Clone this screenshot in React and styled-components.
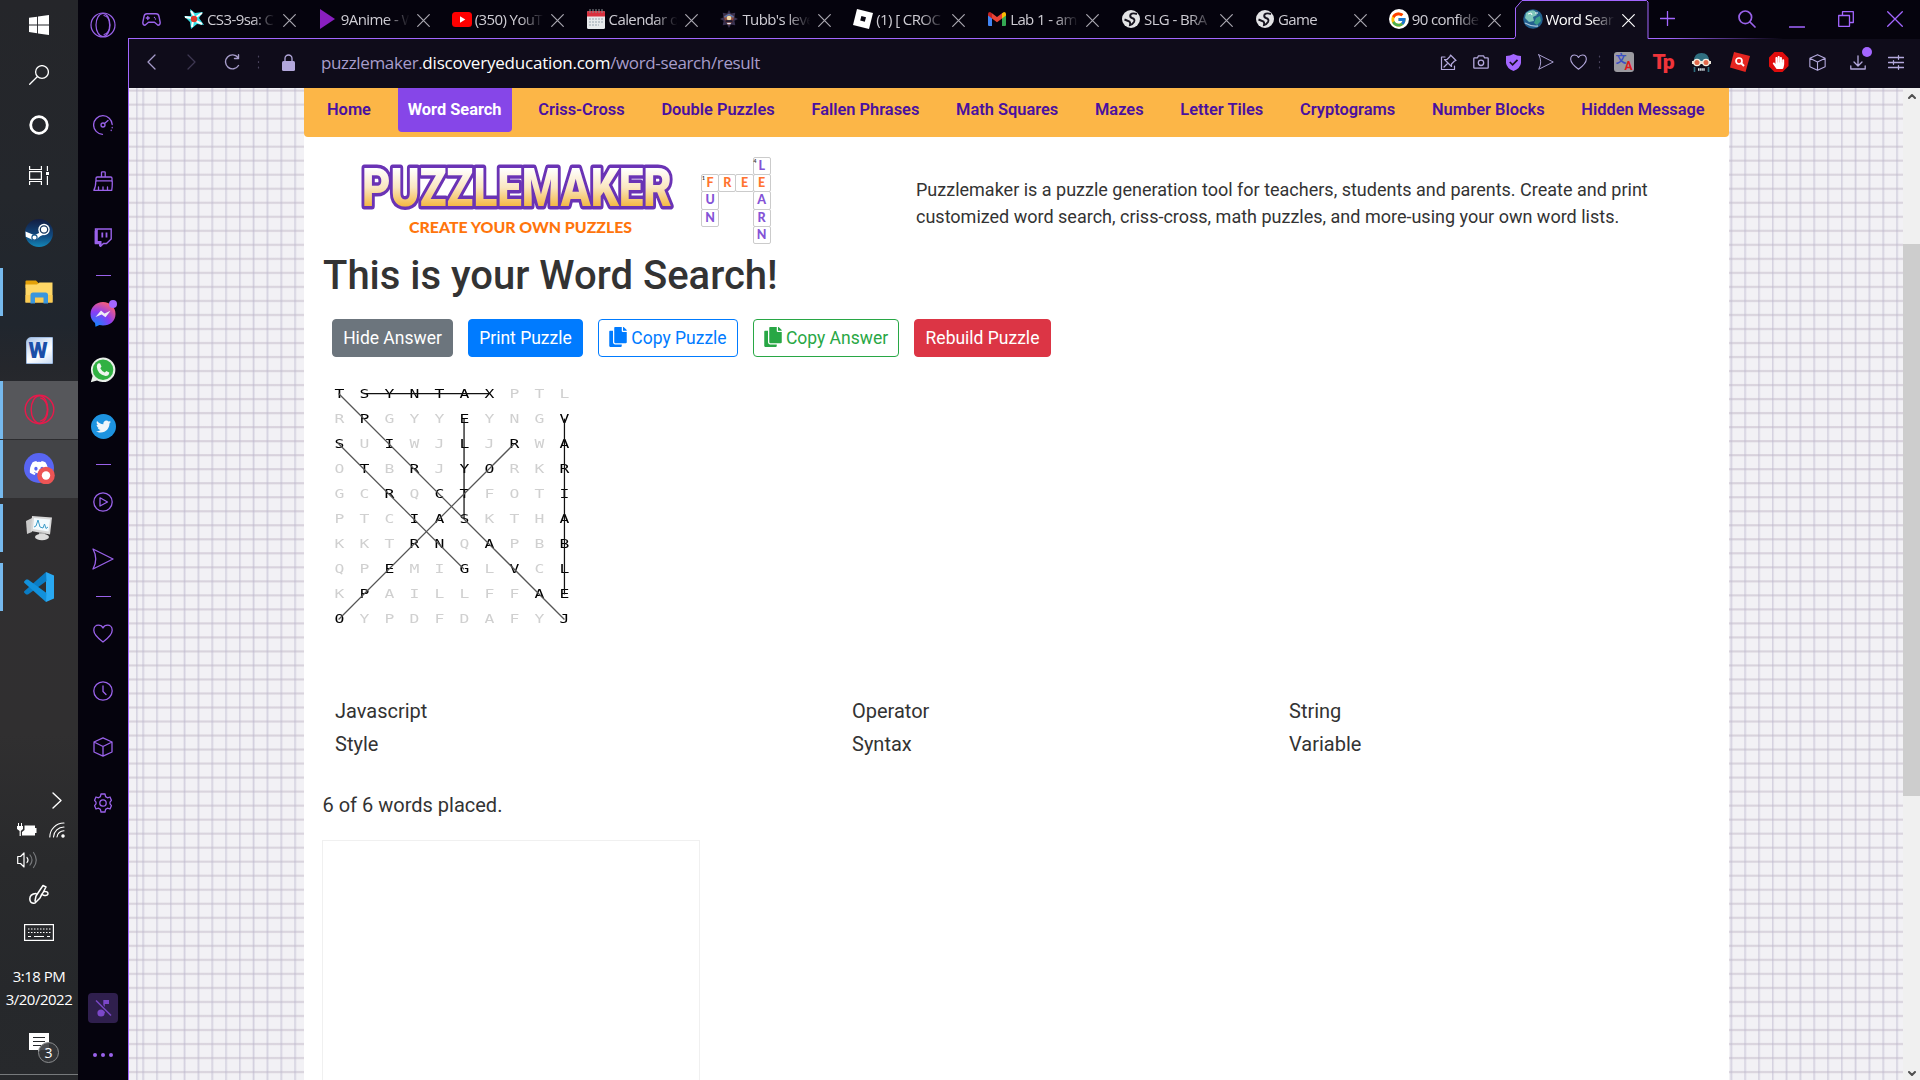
import React from 'react';
import styled, { createGlobalStyle, css } from 'styled-components';
import { FaTwitter, FaDiscord, FaCopy, FaHandPaper } from 'react-icons/fa';
import { FcGoogle } from 'react-icons/fc';

const GlobalStyle = createGlobalStyle`
  * { box-sizing: border-box; }
  html, body, #root { margin: 0; height: 100%; }
  body { overflow: hidden; background: #05030d; }
  svg { display: block; flex: none; }
`;

const segoe = css`font-family: 'Open Sans', 'Noto Sans', sans-serif;`;
const PURPLE = '#a366ff';
const SIDE = '#9a62ea';
const LILAC = '#b3a8dc';

const Desktop = styled.div`
  display: flex;
  width: 1920px;
  height: 1080px;
  overflow: hidden;
`;

/* ---------- Windows taskbar ---------- */
const Taskbar = styled.aside`
  display: flex;
  flex-direction: column;
  width: 78px;
  height: 100%;
  background: linear-gradient(#25262a 0, #24272c 18%, #20262e 30%, #25272c 34%, #302f31 44%, #302f30 68%, #292a2c 80%, #26282b 92%, #27292c 100%);
`;
const SystemCell = styled.div`
  display: flex;
  align-items: center;
  justify-content: center;
  height: 50px;
`;
const Apps = styled.div`
  display: flex;
  flex-direction: column;
  gap: 1px;
  padding-top: 4px;
`;
const AppCell = styled.div`
  display: flex;
  align-items: center;
  height: 58px;
  background: ${p => p.$bg || 'transparent'};
`;
const Indicator = styled.span`
  width: 3px;
  height: ${p => (p.$on ? (p.$tall ? 58 : 48) : 0)}px;
  background: #76b9ed;
`;
const AppIcon = styled.span`
  display: flex;
  flex: 1;
  justify-content: center;
  padding: 0 3px 1px 0;
`;
const Tray = styled.div`
  display: flex;
  flex-direction: column;
  margin-top: auto;
  height: 295px;
`;
const TrayRow = styled.div`
  display: flex;
  align-items: center;
  justify-content: ${p => p.$justify || 'center'};
  gap: 12px;
  height: ${p => p.$h}px;
  padding: ${p => p.$pad || 0};
`;
const Clock = styled.div`
  ${segoe}
  height: 67px;
  padding-top: 14px;
  color: #fff;
  font-size: 15px;
  letter-spacing: -0.5px;
  line-height: 23px;
  text-align: center;
  white-space: nowrap;
`;
const NoticeCell = styled.div`
  position: relative;
  display: flex;
  justify-content: center;
  height: 56px;
  padding-top: 15px;
`;
const NoticeCount = styled.span`
  ${segoe}
  position: absolute;
  left: 38px;
  top: 24px;
  width: 21px;
  height: 21px;
  border: 1px solid #8b8d8f;
  border-radius: 50%;
  background: #35373ae0;
  color: #fff;
  font-size: 14px;
  line-height: 19px;
  text-align: center;
`;
const DesktopEdge = styled.div`
  height: 6px;
  border-top: 1px solid #777a7c;
`;

/* ---------- Opera sidebar ---------- */
const Sidebar = styled.aside`
  display: flex;
  flex-direction: column;
  align-items: center;
  width: 50px;
  height: 100%;
  background: #05030d;
`;
const SideCell = styled.div`
  display: flex;
  align-items: center;
  justify-content: center;
  width: 100%;
  height: ${p => p.$h || 56.3}px;
`;
const SideDash = styled.span`
  width: 15px;
  height: 1px;
  background: ${SIDE};
`;
const IconWithBadge = styled.span`
  position: relative;
  display: flex;
`;
const Badge = styled.span`
  position: absolute;
  right: -1px;
  top: -1px;
  width: 8px;
  height: 8px;
  border-radius: 50%;
  background: ${PURPLE};
`;
const RoundLogo = styled.span`
  display: flex;
  align-items: center;
  justify-content: center;
  width: ${p => p.$size}px;
  height: ${p => p.$size}px;
  border-radius: 50%;
  background: ${p => p.$bg};
`;
const MutedTile = styled.div`
  display: flex;
  align-items: center;
  justify-content: center;
  width: 30px;
  height: 30px;
  margin-top: auto;
  border-radius: 4px;
  background: #2f1f4d;
`;
const MoreDots = styled.div`
  display: flex;
  gap: 4px;
  height: 57px;
  padding-top: 30px;
`;
const Dot = styled.span`
  width: 4px;
  height: 4px;
  border-radius: 50%;
  background: ${SIDE};
`;

/* ---------- Browser chrome ---------- */
const Browser = styled.main`
  display: flex;
  flex: 1;
  flex-direction: column;
  min-width: 0;
`;
const TabStrip = styled.header`
  display: flex;
  height: 39px;
  background:
    linear-gradient(90deg, ${PURPLE} 0, ${PURPLE} 1540px, transparent 1655px) 0 38px / 100% 1px no-repeat,
    #05030d;
`;
const PadIcon = styled.div`
  width: 49px;
  padding: 13px 0 0 14px;
`;
const Tab = styled.div`
  ${segoe}
  position: relative;
  display: flex;
  align-items: center;
  width: 133.86px;
  height: 39px;
  padding: 0 0 1px 6px;
  color: ${p => (p.$active ? '#fff' : '#cfcdd4')};
`;
const TabShape = styled.svg`
  position: absolute;
  left: -2px;
  top: 0;
`;
const TabIcon = styled.span`
  position: relative;
  display: flex;
  justify-content: center;
  width: 22px;
`;
const TabTitle = styled.span`
  position: relative;
  width: 70px;
  margin-left: 2px;
  padding-bottom: 1px;
  overflow: hidden;
  font-size: 15px;
  letter-spacing: -0.6px;
  line-height: 22px;
  white-space: pre;
  mask-image: linear-gradient(90deg, #000 64%, transparent 98%);
`;
const TabClose = styled.span`
  position: relative;
  margin-left: 6px;
  margin-top: 2px;
`;
const NewTab = styled.div`
  padding: 11px 0 0 11px;
`;
const WindowControls = styled.div`
  display: flex;
  align-items: center;
  gap: 33px;
  margin-left: auto;
  padding: 0 17px 1px 0;
`;
const AddressBar = styled.div`
  display: flex;
  align-items: center;
  height: 49px;
  padding: 0 8px 3px 14px;
  border-left: 1px solid ${PURPLE};
  background: #0f0c1a;
`;
const NavIcons = styled.div`
  display: flex;
  align-items: center;
  width: 178px;
`;
const NavIcon = styled.span`
  display: flex;
  justify-content: center;
  width: ${p => p.$w}px;
`;
const Url = styled.div`
  ${segoe}
  color: #a79dcb;
  font-size: 17px;
  letter-spacing: -0.36px;
  line-height: 24px;
  padding-top: 1px;
`;
const UrlHost = styled.span`
  color: #fff;
  letter-spacing: -0.2px;
`;
const Actions = styled.div`
  display: flex;
  align-items: center;
  margin-left: auto;
`;
const Action = styled.span`
  display: flex;
  align-items: center;
  justify-content: center;
  width: ${p => p.$w}px;
  height: 26px;
`;
const DownloadBadge = styled(Badge)`
  right: -6px;
  top: -8px;
  width: 10px;
  height: 10px;
`;

/* ---------- Page ---------- */
const Viewport = styled.div`
  display: flex;
  flex: 1;
  min-height: 0;
  border-left: 1px solid ${PURPLE};
`;
const Graph = styled.div`
  display: flex;
  flex: 1;
  padding: 0 174px 0 175px;
  background:
    repeating-linear-gradient(90deg, #c3bfd333 0, #b9b4cc88 1px, #c3bfd355 2px, transparent 3px, transparent 12.81px, #c9c6da00 13.81px) 13px 0,
    repeating-linear-gradient(180deg, #cfc8d400 0, #cbc3d099 1px, #cbc3d0aa 2px, transparent 3.4px, transparent 14.02px) 0 1px,
    #f2f1f5;
`;
const Sheet = styled.article`
  display: flex;
  flex: 1;
  flex-direction: column;
  background: #fff;
  color: #333;
  font-family: Roboto, sans-serif;
`;
const NavBar = styled.nav`
  display: flex;
  gap: 16.8px;
  height: 49px;
  padding-left: 13px;
  border-radius: 0 0 4px 4px;
  background: #fcb647;
`;
const NavLink = styled.a`
  height: 44px;
  padding: 9px 10px 0;
  border-radius: 0 0 4px 4px;
  background: ${p => (p.$active ? '#8646e8' : 'transparent')};
  color: ${p => (p.$active ? '#fff' : '#4a10a0')};
  font-size: 16.4px;
  font-weight: ${p => (p.$active ? 700 : 600)};
  line-height: 25px;
  white-space: nowrap;
`;
const Masthead = styled.section`
  display: flex;
  height: 111px;
  padding: 0 0 0 55px;
`;
const Brand = styled.div`
  width: 342px;
  padding-top: 25px;
`;
const Slogan = styled.div`
  margin-top: 1px;
  padding-left: 50px;
  color: #ff750c;
  font: 900 15.9px/20px Lato, sans-serif;
  white-space: nowrap;
`;
const Crossword = styled.div`
  display: grid;
  grid-template-columns: repeat(4, 17.2px);
  grid-template-rows: repeat(5, 17.2px);
  width: 215px;
  padding-top: 20px;
`;
const CrossCell = styled.span`
  grid-column: ${p => p.$col};
  grid-row: ${p => p.$row};
  display: flex;
  align-items: center;
  justify-content: center;
  position: relative;
  width: 18.2px;
  height: 18.2px;
  border: 1.4px solid #cbcbcb;
  border-radius: 2px;
  background: #fff;
  color: ${p => (p.$hot ? '#ff7330' : '#8453d6')};
  font: 900 12.5px/16px Lato, sans-serif;
`;
const CrossNumber = styled.span`
  position: absolute;
  left: 0;
  top: 0;
  color: #333;
  font: 700 5px/6px Lato, sans-serif;
`;
const Intro = styled.p`
  width: 760px;
  margin: 0;
  padding-top: 39px;
  font-size: 18px;
  line-height: 27px;
`;
const Body = styled.section`
  display: flex;
  flex: 1;
  flex-direction: column;
  align-items: flex-start;
  padding-left: 18px;
`;
const Title = styled.h1`
  margin: 0;
  padding-left: 1px;
  font-size: 40px;
  font-weight: 500;
  line-height: 56px;
`;
const Buttons = styled.div`
  display: flex;
  gap: 15px;
  margin-top: 15px;
  padding-left: 10px;
`;
const Button = styled.button`
  display: flex;
  align-items: center;
  justify-content: center;
  gap: 4px;
  width: ${p => p.$w}px;
  height: 38px;
  padding: 0;
  border: 1px solid ${p => p.$color};
  border-radius: 4px;
  background: ${p => (p.$outline ? '#fff' : p.$color)};
  color: ${p => (p.$outline ? p.$color : '#fff')};
  font: 400 17.5px/26px Roboto, sans-serif;
  white-space: nowrap;
`;
const CopyIcon = styled(FaCopy)`
  width: 18px;
  height: 20px;
  margin-bottom: 2px;
`;
const Puzzle = styled.div`
  position: relative;
  display: grid;
  grid-template-columns: repeat(10, 25.03px);
  grid-auto-rows: 25.05px;
  margin: 23.5px 0 0 4px;
`;
const Letter = styled.span`
  display: flex;
  align-items: center;
  justify-content: center;
  padding-left: 1.6px;
  color: ${p => (p.$hit ? '#000' : '#d0d0d0')};
  font: 400 12.6px/25px 'DejaVu Sans Mono', monospace;
  transform: scaleX(1.3);
`;
const Strokes = styled.svg`
  position: absolute;
  inset: 0;
`;
const Words = styled.div`
  display: grid;
  grid-template-columns: 517px 437px 200px;
  margin-top: 64px;
  padding-left: 13px;
  font-size: 20px;
  line-height: 33px;
`;
const Placed = styled.p`
  margin: 28px 0 0;
  padding-left: 0.5px;
  font-size: 20px;
  line-height: 33px;
`;
const AdBox = styled.div`
  width: 378px;
  flex: 1;
  margin-top: 18px;
  border: 1px solid #f0f0f0;
  border-bottom: 0;
`;
const Scrollbar = styled.div`
  display: flex;
  flex-direction: column;
  align-items: center;
  width: 17px;
  padding: 6px 0 4px;
  background: #f0f0f0;
`;
const Thumb = styled.div`
  width: 17px;
  height: 552px;
  margin: 145px 0 auto;
  background: #cdcdcd;
`;

/* ---------- Icons ---------- */
const Line = ({ w = 20, h, vb, c = LILAC, sw = 1.3, children }) => (
  <svg width={w} height={h || w} viewBox={vb || `0 0 ${w} ${h || w}`} fill="none" stroke={c} strokeWidth={sw} strokeLinejoin="round" strokeLinecap="round">
    {children}
  </svg>
);
const CrossIcon = ({ s = 12, c, sw = 1.3 }) => <Line w={s} c={c} sw={sw}><path d={`M.7 .7 L${s - 0.7} ${s - 0.7} M${s - 0.7} .7 L.7 ${s - 0.7}`} /></Line>;
const Heart = ({ s = 20, c }) => <Line w={s} vb="0 0 20 20" c={c}><path d="M10 18 C6 15 .8 11 .8 6.2 C.8 3 3 1.2 5.4 1.2 C7.600 1.200 9.200 2.300 10 4 C10.800 2.300 12.400 1.200 14.600 1.200 C17 1.200 19.200 3 19.200 6.200 C19.200 11 14 15 10 18Z" /></Line>;
const Send = ({ w, c }) => <Line w={w} vb="0 0 22 22" c={c}><path d="M1 1 L21 11 L1 21 Q6.500 11 1 1Z" /></Line>;
const Cube = ({ s, c }) => <Line w={s} vb="0 0 20 20" c={c}><path d="M10 .8 L19 5 V15 L10 19.2 L1 15 V5Z M1 5 L10 9.500 L19 5 M10 9.500 V19" /></Line>;
const OperaRing = ({ s, c, sw }) => <Line w={s} vb="0 0 26 26" c={c} sw={sw}><circle cx="13" cy="13" r="12" /><ellipse cx="13" cy="13" rx="7" ry="11.500" /><path d="M14 3.500 C21.500 5 21.500 21 14 22.500" /></Line>;
const Dots = () => <Line w={3} h={14} c="#4a445e" sw={1.2}><path d="M1.500 1v1M1.500 6.500v1M1.500 12v1" /></Line>;

const Windows = () => <svg width="20" height="20" viewBox="0 0 20 20" fill="#fff"><path d="M0 2.800 L8.100 1.700 V9.500 H0Z M9 1.500 L20 0 V9.500 H9Z M0 10.400 H8.100 V18.200 L0 17.100Z M9 10.400 H20 V20 L9 18.400Z" /></svg>;
const TaskSearch = () => <Line w={20} c="#fff" sw={1.3}><circle cx="13" cy="7" r="6.400" /><path d="M8.500 11.500 L.7 19.300" /></Line>;
const TaskView = () => <svg width="20" height="19" viewBox="0 0 20 19" fill="none" stroke="#fff" strokeWidth="1.200"><path d="M.6 0V3.500H12.400V0M.6 5.600H12.400V13.400H.6ZM.6 19V15.500H12.400V19M18.400 0V5M18.400 10V19" /><rect x="17" y="6" width="3" height="3" fill="#fff" stroke="none" /></svg>;
const Folder = () => <svg width="28" height="24" viewBox="0 0 28 24"><path d="M.5 1.500 Q.5.500 1.500.500H11L14 3.500V8H.5Z" fill="#e3a008" /><path d="M.5 4.500H12L14.500 2.500H27.500V22.500H.5Z" fill="#ffd766" /><path d="M.5 15H27.500V22.500H.5Z" fill="#fbcb52" /><path d="M5.500 23.500V15Q5.500 12.500 8 12.500H20.500Q23 12.500 23 15V23.500H18.500V17.500H10V23.500Z" fill="#3a96dd" /></svg>;
const WordLogo = styled.span`
  display: flex;
  align-items: center;
  width: 27px;
  height: 27px;
  padding-left: 2px;
  border: 1px solid #9db9df;
  border-radius: 5px 0 0 0;
  background: linear-gradient(150deg, #a9c4e8, #eef4fc 45%, #fff 60%, #c9dcf4);
  color: #1b4fa8;
  font: 900 22px/23px Roboto, sans-serif;
`;
const Monitor = () => <svg width="28" height="26" viewBox="0 0 28 26"><path d="M1 6 L7 3 V17 L2 19Z" fill="#c9c9c9" /><path d="M7 1 L27 2.500 L25 19.500 L6 16Z" fill="#d8d8d8" /><path d="M9 3 L25 4.500 L23.500 16.500 L8 14Z" fill="#f3fafd" /><path d="M9 12 L11 11 L13 5 L15 12 L18 13 L19.500 9 L21 13.500 L23 12" fill="none" stroke="#3d9cc9" /><path d="M14 17 L20 18 V21 H14Z" fill="#aaa" /><ellipse cx="17" cy="22" rx="7" ry="3.300" fill="#dcdcdc" /></svg>;
const Code = () => <svg width="30" height="30" viewBox="0 0 30 30"><path d="M22 0 L30 3.500 V26.500 L22 30 Z" fill="#29a9f2" /><path d="M22 0 L22.500 9 L4 22.500 L2.200 22.500 L.3 20.800 Q-.3 19.800 .5 19Z" fill="#0a7cc4" /><path d="M22 30 L22.500 21 L4 7.500 L2.200 7.500 L.3 9.200 Q-.3 10.200 .5 11Z" fill="#1291dc" /></svg>;
const Discord = () => <svg width="31" height="31" viewBox="0 0 31 31"><circle cx="15" cy="15" r="15" fill="#5865f2" /><g transform="translate(5 5)"><FaDiscord size={20} color="#fff" /></g><circle cx="22" cy="22.500" r="8.800" fill="#ed5555" /><circle cx="22" cy="22.500" r="4.200" fill="#fff" /></svg>;
const Steam = () => <svg width="28" height="28" viewBox="0 0 28 28"><defs><linearGradient id="steam" x2="0" y2="1"><stop stopColor="#131c40" /><stop offset=".6" stopColor="#114a80" /><stop offset="1" stopColor="#1387b8" /></linearGradient></defs><circle cx="14" cy="14" r="14" fill="url(#steam)" /><path d="M.5 12.500 L9.500 16.300 L14 14 L15 9 L22 14.500 L15.500 17 L13 19 Q11 22 8 21 L.8 17.800Z" fill="#fff" /><circle cx="19" cy="10.500" r="5.700" fill="#fff" /><circle cx="19" cy="10.500" r="3.700" fill="none" stroke="#15365f" strokeWidth="1.300" /><circle cx="9.500" cy="18.500" r="2.600" fill="none" stroke="#15568a" strokeWidth="1.100" /></svg>;
const Battery = () => <svg width="20" height="14" viewBox="0 0 20 14" fill="#fff"><path d="M1 0h1v3h2V0h1v3h1v3L3.800 8v5H2.600V8L0 6V3h1z" /><path d="M7.500 2.500H18V5H19.500V10H18V12.500H5V9L7.500 7Z" /></svg>;
const Wifi = () => <Line w={16} c="#fff" sw={1.1}><path d="M.8 15 A14 14 0 0 1 15 1 M4.500 15 A10.500 10.500 0 0 1 15 5 M8 15 A7 7 0 0 1 15 8.700" /><circle cx="14" cy="14" r="1.200" fill="#fff" /></Line>;
const Volume = () => <Line w={20} h={18} c="#fff" sw={1.2}><path d="M.7 5.500H3.500L7 2V16L3.500 12.500H.7Z M10 6.500 Q12 9 10 11.500" /><path d="M13 4 Q17 9 13 14 M16.500 1.500 Q22 9 16.500 16.500" stroke="#77797c" /></Line>;
const Pen = () => <Line w={20} c="#fff" sw={1.5}><path d="M6 17 L7 12 L14 1.500 L17 3 L11 14 L6 19 M7 9.500 Q.8 10 .8 15 Q1 19.300 5 19.300 M11 14 Q13 9 15 7.500 Q19 7 19 10 Q18 12.500 14 11" /></Line>;
const Keyboard = () => <svg width="30" height="17" viewBox="0 0 30 17" fill="none" stroke="#fff"><rect x=".6" y=".6" width="28.800" height="15.800" strokeWidth="1.200" /><path d="M4 5H27M4 8.500H27" strokeDasharray="1.500 1.500" /><path d="M4 12.500H7M10 12.500H20M23 12.500H26" /></svg>;
const Notice = () => <svg width="20" height="19" viewBox="0 0 20 19"><path d="M0 0H20V17H12L9 19V17H0Z" fill="#fff" /><path d="M4 4.500H16M4 8.500H16M4 12.500H12" stroke="#26282b" strokeWidth="1.200" /></svg>;

const Speed = () => <Line w={20} c={SIDE}><path d="M9.500 19.300 A9.300 9.300 0 1 1 19.200 9.500 M19.200 12.500v.3 M18.200 15.200v.3" /><circle cx="10" cy="10" r="2" /><path d="M11.500 8.500 L15 5.500" /></Line>;
const Broom = () => <Line w={20} c={SIDE}><path d="M8.500 6V1.500Q8.500.800 9.200.800H11.500Q12.200.800 12.200 1.500V6 M3 10.500V7.300Q3 6 4.300 6H17.700Q19 6 19 7.300V10.500 M2.800 9.800H19.200 M2.800 10 Q2.800 16 .8 19.300H18.700Q19.500 15 19.200 10 M5.500 19 V16 M10 19V16M14.500 19V16" /></Line>;
const Twitch = () => <svg width="18" height="19" viewBox="0 0 18 19"><path d="M1.500 1 H17.200 V11 L12.500 15.500 H9.500 L6.500 18.300 V15.500 H1.500Z" fill="#05030d" stroke={SIDE} strokeWidth="1.400" /><path d="M.7 3 L3.800 .8 V13 H7.500 V18.300H5 V15.800H.7Z" fill={SIDE} /><path d="M8.300 4.500V9.500M12.500 4.500V9.500" stroke={SIDE} strokeWidth="1.800" /></svg>;
const Messenger = () => <svg width="26" height="26" viewBox="0 0 26 26"><defs><radialGradient id="msg" cx=".2" cy="1" r="1.100"><stop stopColor="#0a8cff" /><stop offset=".55" stopColor="#8a3cf5" /><stop offset="1" stopColor="#ff6070" /></radialGradient></defs><path d="M13 1 C20 1 25.500 6 25.500 13 C25.500 20 20 24.500 13 24.500 L9.500 24 L5.500 25.800 L5 22 C2 20 .5 17 .5 13 C.5 6 6 1 13 1Z" fill="url(#msg)" /><path d="M5.500 16 L11 9.500 L14.500 12.500 L20.500 9.800 L15.500 16.300 L11.700 13.500Z" fill="#f0ecf5" /></svg>;
const WhatsApp = () => <svg width="26" height="26" viewBox="0 0 26 26"><path d="M13 .5 A12.300 12.300 0 1 1 7 23.500 L.8 25.300 L2.600 19 A12.300 12.300 0 0 1 13 .5Z" fill="#e9efe9" /><circle cx="13" cy="12.800" r="10.300" fill="#31b143" /><path d="M8 6.500 L10 6.300 L11.500 9.500 L10.300 11.300 Q11.500 14 14.800 15.500 L16.300 13.900 L19.300 15.500 Q19 19 15.500 19 Q7.500 17.500 6.800 9.800 Q6.900 7.500 8 6.500Z" fill="#f0f5f0" /></svg>;
const PlayRing = () => <Line w={20} c={SIDE}><circle cx="10" cy="10" r="9.200" /><path d="M7 5.800 L14.500 10 L7 14Z" /></Line>;
const ClockIcon = () => <Line w={20} c={SIDE}><circle cx="10" cy="10" r="9.200" /><path d="M10 5V10.500L13 13.500" /></Line>;
const Gear = () => <Line w={18} h={20} vb="0 0 18 20" c={SIDE}><circle cx="9" cy="10" r="3.200" /><path d="M7 1H11L11.600 3.600L13.500 4.800L16 4L17.400 7.300L16 9.200V10.800L17.400 12.700L16 16L13.500 15.200L11.600 16.400L11 19H7L6.400 16.400L4.500 15.200L2 16L.6 12.700L2 10.800V9.200L.6 7.300L2 4L4.500 4.800L6.400 3.600Z" /></Line>;
const Muted = () => <svg width="17" height="18" viewBox="0 0 17 18"><circle cx="6" cy="14" r="3.600" fill="#7c48c9" /><path d="M8.300 1 H14 V5 H9.800 V14 H8.300Z" fill="#7c48c9" /><path d="M1 1.500 L16 16.500" stroke="#2f1f4d" strokeWidth="3.500" /><path d="M1 1.500 L16 16.500" stroke="#7c48c9" strokeWidth="1.400" /></svg>;

const Gamepad = () => <Line w={19} h={13} c={SIDE} sw={1.4}><path d="M5 .8 H14 Q16.500 .8 17 3.500 L18.200 9.500 Q18.200 12.200 16 12.200 L12.500 9.300 H6.500 L3 12.200 Q.8 12.200 .8 9.500 L2 3.500 Q2.500 .8 5 .8Z M5.800 3.500V6.500M4.300 5H7.300M12.500 4.500v.1M13.500 6v.1" /></Line>;
const Pinwheel = () => <svg width="20" height="20" viewBox="0 0 20 20"><path d="M6 0 L11 4 L19 3 L15 9 L20 16 L13 15 L7 20 L6 13 L0 7 L7 7Z" fill="#35e0e6" /><path d="M7 2 L10 7 M18 4 L12 8 M18 15 L12 12 M8 18 L9 12 M1 8 L7 9" stroke="#fff" strokeWidth="2" /><circle cx="10" cy="10" r="3.200" fill="#e03a2c" /></svg>;
const PlayMark = () => <svg width="17" height="22" viewBox="0 0 17 22"><path d="M1 1 L16 11 L1 21Z" fill="#8a1fc0" /></svg>;
const YouTube = () => <svg width="20" height="15" viewBox="0 0 20 15"><rect width="20" height="15" rx="3.500" fill="#f00" /><path d="M8 4.300 L13.300 7.500 L8 10.700Z" fill="#fff" /></svg>;
const CalendarIcon = () => <svg width="18" height="20" viewBox="0 0 18 20"><rect y="2" width="18" height="18" rx="1.500" fill="#e8eaec" /><path d="M0 3.500 Q0 2 1.500 2H16.500Q18 2 18 3.500V7.500H0Z" fill="#d9303e" /><path d="M3 0V4M6 0V4M9 0V4M12 0V4M15 0V4" stroke="#8a8f93" /><path d="M2 10H16M2 13H16M2 16H12" stroke="#b3bcc2" strokeWidth="1.500" strokeDasharray="2 1" /></svg>;
const Spiky = () => <svg width="18" height="18" viewBox="0 0 20 20"><path d="M10 0 L12 4 L17 3 L16 8 L20 10 L16 12 L17 17 L12 16 L10 20 L8 16 L3 17 L4 12 L0 10 L4 8 L3 3 L8 4Z" fill="#3a3250" /><path d="M4 7 L10 4 L16 7 L14 13 L10 17 L6 13Z" fill="#8c4a3f" /><path d="M5 8 L10 5 L15 8" stroke="#4b78b8" strokeWidth="1.500" fill="none" /><circle cx="10" cy="9" r="2.600" fill="#f0d9a8" /><path d="M6 12.500H14" stroke="#201a30" strokeWidth="2.500" /><path d="M8 15H12" stroke="#e8e4ea" strokeWidth="1.500" /></svg>;
const Roblox = () => <svg width="20" height="20" viewBox="0 0 20 20"><path d="M4 0 L20 4 L16 20 L0 16Z" fill="#fff" /><path d="M8.400 7 L13 8.200 L11.800 12.800 L7.200 11.600Z" fill="#0a0812" /></svg>;
const Gmail = () => <svg width="18" height="14" viewBox="0 0 18 14"><path d="M0 2V13Q0 14 1 14H4V5Z" fill="#4285f4" /><path d="M18 2V13Q18 14 17 14H14V5Z" fill="#34a853" /><path d="M4 1.200 L9 5 L14 1.200 V6.500 L9 10.300 L4 6.500Z" fill="#ea4335" /><path d="M0 2Q0 0 2 0L4 1.200V6.500L0 3.500Z" fill="#c5221f" /><path d="M18 2Q18 0 16 0L14 1.200V6.500L18 3.500Z" fill="#fbbc04" /></svg>;
const WebGlobe = () => <svg width="18" height="18" viewBox="0 0 18 18"><circle cx="9" cy="9" r="9" fill="#e4e4e6" /><path d="M15 4 Q10.500 2.500 8.500 4.500 Q7.500 7 10 8 Q13.500 9 12 12 Q10.500 14.500 8 15 Q8.500 12.500 7.500 11.500 L2.500 9.500" fill="none" stroke="#17141f" strokeWidth="1.900" /></svg>;
const Google = () => <RoundLogo $size={20} $bg="#fff"><FcGoogle size={17} /></RoundLogo>;
const Earth = () => <svg width="20" height="20" viewBox="0 0 20 20"><circle cx="10" cy="10" r="9.800" fill="#23608f" /><path d="M3 4 Q8 0 12 2 L14 6 L10 8 L11 12 L6 13 L2 9Z" fill="#7fc7bb" /><path d="M13 9 L17 7 L18 12 L14 16 L11 14Z" fill="#3ca08a" /><path d="M2 14 Q9 18 15 17" stroke="#a9c7dd" strokeWidth="1.300" fill="none" /><path d="M5 5 L8 4 L9 6 M12 4 L15 4" stroke="#fff" fill="none" /></svg>;

const PinOut = () => <Line w={17} sw={1.2}><path d="M5 3 H1.500 V15.500 H14.500 V12" /><path d="M10.500 1 L16 6.500 L14.500 7 L11.500 10 L11.500 12.500 L4.500 5.500 L7 5.500 L10 2.500Z M8 9 L4 13" /></Line>;
const Camera = () => <Line w={16} h={14}><path d="M.8 3.500 Q.8 2.800 1.500 2.800H4.500L5.500.800H10.500L11.500 2.800H14.500Q15.200 2.800 15.200 3.500V12.500Q15.200 13.200 14.500 13.200H1.500Q.8 13.200.8 12.500Z" /><circle cx="8" cy="7.800" r="2.700" /></Line>;
const Shield = () => <svg width="15" height="17" viewBox="0 0 15 17"><path d="M7.500 0 Q11 2 15 2 V9 Q14.500 14 7.500 17 Q.5 14 0 9 V2 Q4 2 7.500 0Z" fill={PURPLE} /><path d="M3.800 8 L6.600 10.800 L11.500 5.800" stroke="#151022" strokeWidth="1.700" fill="none" /></svg>;
const TranslateBox = styled.span`
  display: flex;
  justify-content: center;
  width: 20px;
  height: 20px;
  border-radius: 3px;
  background: #9b9aa0;
  color: #3b50c4;
  font: 700 11px/12px 'Noto Sans CJK SC', sans-serif;
`;
const TranslateA = styled.span`
  align-self: flex-end;
  margin-left: -2px;
  color: #e01919;
  font: 700 12px/12px Roboto, sans-serif;
`;
const TpLogo = styled.span`
  padding-bottom: 1px;
  color: #f0343a;
  font: 900 21px/18px Roboto, sans-serif;
  letter-spacing: -2px;
`;
const Robot = () => <svg width="19" height="20" viewBox="0 0 19 20"><path d="M2 9 Q2 1 9.500 1 Q17 1 17 9Z" fill="#2f6f80" /><path d="M0 9H19V12H0Z" fill="#e9e4da" /><circle cx="5" cy="10.500" r="3.800" fill="#f3eee2" /><circle cx="14" cy="10.500" r="3.800" fill="#f3eee2" /><circle cx="5" cy="10.500" r="2.500" fill="#e2694c" /><circle cx="14" cy="10.500" r="2.500" fill="#e2694c" /><path d="M2.500 15V20M16.500 15V20" stroke="#2f6f80" strokeWidth="1.600" /><path d="M6 17.500H13" stroke="#d9e4e8" strokeWidth="2.500" strokeDasharray="1.500 .6" /></svg>;
const RedSearch = () => <svg width="20" height="20" viewBox="0 0 20 20"><path d="M4 0 L20 4 L15.500 20 L0 15.500Z" fill="#e52520" /><circle cx="9" cy="9" r="3" fill="none" stroke="#fff" strokeWidth="1.700" /><path d="M11 11 L14 14" stroke="#fff" strokeWidth="1.900" /></svg>;
const StopSign = styled.span`
  display: flex;
  align-items: center;
  justify-content: center;
  width: 20px;
  height: 20px;
  background: #e00d0d;
  clip-path: polygon(30% 0, 70% 0, 100% 30%, 100% 70%, 70% 100%, 30% 100%, 0 70%, 0 30%);
`;
const Download = () => <Line w={16} h={15}><path d="M.8 11V14H15.200V11M8 .8V10.500M4 7L8 11L12 7" /></Line>;
const Sliders = () => <Line w={16} h={15}><path d="M.5 2.500H15.500M.5 7.500H15.500M.5 12.500H15.500M10.500 .7V4.300M5.500 5.700V9.300M10.500 10.700V14.300" /></Line>;
const Reload = () => <Line w={16} c="#a79dcb" sw={1.400}><path d="M14 3.500 A7 7 0 1 0 14.500 11.500 M14.500 .8V4.500H10.500" /></Line>;
const Lock = () => <svg width="13" height="17" viewBox="0 0 13 17"><path d="M3 8V4.500A3.500 3.500 0 0 1 10 4.500V8" fill="none" stroke={LILAC} strokeWidth="1.300" /><rect y="7" width="13" height="10" rx="1.500" fill={LILAC} /></svg>;
const ArrowUp = () => <Line w={8} h={5} c="#505050" sw={2}><path d="M1 4L4 1L7 4" /></Line>;
const ArrowDown = () => <Line w={8} h={5} c="#505050" sw={2}><path d="M1 1L4 4L7 1" /></Line>;

const Wordmark = () => (
  <svg width="320" height="54" viewBox="0 0 320 54">
    <defs>
      <linearGradient id="gold" x1="0" y1="0" x2="0" y2="1">
        <stop offset=".2" stopColor="#fff" /><stop offset=".5" stopColor="#fae6c0" /><stop offset=".8" stopColor="#f4b842" />
      </linearGradient>
    </defs>
    <text x="3" y="44" textLength="310" lengthAdjust="spacingAndGlyphs" fontFamily="Roboto, sans-serif" fontWeight="900" fontSize="53.500" fill="url(#gold)" stroke="#6a33b5" strokeWidth="7" strokeLinejoin="round" paintOrder="stroke">PUZZLEMAKER</text>
  </svg>
);

/* ---------- Data ---------- */
const tabs = [
  [Pinwheel, 'CS3-9sa: C'], [PlayMark, '9Anime - W'], [YouTube, '(350) YouTu'], [CalendarIcon, 'Calendar o'], [Spiky, "Tubb's leve"],
  [Roblox, '(1) [ CROC'], [Gmail, 'Lab 1 - am'], [WebGlobe, 'SLG - BRA'], [WebGlobe, 'Game'], [Google, '90 confide'], [Earth, 'Word Sear'],
];
const nav = ['Home', 'Word Search', 'Criss-Cross', 'Double Puzzles', 'Fallen Phrases', 'Math Squares', 'Mazes', 'Letter Tiles', 'Cryptograms', 'Number Blocks', 'Hidden Message'];
const rows = ['TSYNTAXPTL', 'RPGYYEYNGV', 'SUIWJLJRWA', 'OTBRJYORKR', 'GCRQCTFOTI', 'PTCIASKTHA', 'KKTRNQAPBB', 'QPEMIGLVCL', 'KPAILLFFAE', 'OYPDFDAFYJ'];
const strokes = [[0, 0, 9, 9], [1, 0, 6, 0], [0, 2, 5, 7], [5, 1, 5, 5], [7, 2, 0, 9], [9, 1, 9, 8]];
const isHit = (x, y) => strokes.some(([a, b, c, d]) => {
  const n = Math.max(Math.abs(c - a), Math.abs(d - b));
  return Array.from({ length: n + 1 }, (_, i) => i).some(i => a + Math.sign(c - a) * i === x && b + Math.sign(d - b) * i === y);
});
const cross = [['L', 4, 1, 0, '4'], ['F', 1, 2, 1, '1'], ['R', 2, 2, 1], ['E', 3, 2, 1], ['E', 4, 2, 1], ['U', 1, 3], ['A', 4, 3], ['N', 1, 4], ['R', 4, 4], ['N', 4, 5]];
const words = ['Javascript', 'Operator', 'String', 'Style', 'Syntax', 'Variable'];
const apps = [
  [<Steam />], [<Folder />, 1], [<WordLogo>W</WordLogo>], [<OperaRing s={31} c="#e8194b" sw={1.2} />, 1, 1, '#56575b'],
  [<Discord />, 1, 1, '#434447'], [<Monitor />, 1], [<Code />, 1],
];

export default function App() {
  return (
    <Desktop>
      <GlobalStyle />
      <Taskbar>
        <SystemCell><Windows /></SystemCell>
        <SystemCell><TaskSearch /></SystemCell>
        <SystemCell><Line w={20} c="#fff" sw={2.8}><circle cx="10" cy="10" r="8.300" /></Line></SystemCell>
        <SystemCell><TaskView /></SystemCell>
        <Apps>
          {apps.map(([icon, on, tall, bg], i) => (
            <AppCell key={i} $bg={bg}><Indicator $on={on} $tall={tall} /><AppIcon>{icon}</AppIcon></AppCell>
          ))}
        </Apps>
        <Tray>
          <TrayRow $h={30} $justify="flex-end" $pad="0 16px 0 0"><Line w={10} h={17} c="#fff" sw={1.4}><path d="M1 1L9 8.500L1 16" /></Line></TrayRow>
          <TrayRow $h={30} $pad="0 0 0 4px"><Battery /><Wifi /></TrayRow>
          <TrayRow $h={30} $justify="flex-start" $pad="0 0 0 17px"><Volume /></TrayRow>
          <TrayRow $h={38}><Pen /></TrayRow>
          <TrayRow $h={38}><Keyboard /></TrayRow>
          <Clock>3:18 PM<br />3/20/2022</Clock>
          <NoticeCell><Notice /><NoticeCount>3</NoticeCount></NoticeCell>
          <DesktopEdge />
        </Tray>
      </Taskbar>

      <Sidebar>
        <SideCell $h={50}><OperaRing s={26} c={SIDE} sw={1.2} /></SideCell>
        <SideCell $h={47} />
        <SideCell><Speed /></SideCell>
        <SideCell><Broom /></SideCell>
        <SideCell><Twitch /></SideCell>
        <SideCell $h={20}><SideDash /></SideCell>
        <SideCell><IconWithBadge><Messenger /><Badge /></IconWithBadge></SideCell>
        <SideCell><WhatsApp /></SideCell>
        <SideCell><RoundLogo $size={25} $bg="#1d93e0"><FaTwitter size={15} color="#f1f6fa" /></RoundLogo></SideCell>
        <SideCell $h={19}><SideDash /></SideCell>
        <SideCell><PlayRing /></SideCell>
        <SideCell $h={58}><Send w={22} c={SIDE} /></SideCell>
        <SideCell $h={17}><SideDash /></SideCell>
        <SideCell $h={57.5}><Heart c={SIDE} /></SideCell>
        <SideCell><ClockIcon /></SideCell>
        <SideCell><Cube s={20} c={SIDE} /></SideCell>
        <SideCell><Gear /></SideCell>
        <MutedTile><Muted /></MutedTile>
        <MoreDots><Dot /><Dot /><Dot /></MoreDots>
      </Sidebar>

      <Browser>
        <TabStrip>
          <PadIcon><Gamepad /></PadIcon>
          {tabs.map(([Icon, title], i) => {
            const active = i === 10;
            return (
              <Tab key={i} $active={active}>
                {active && (
                  <TabShape width="136" height="39" viewBox="0 0 136 39">
                    <path d="M0 39 L1.500 37 V8 L8 .5 H132.500 L134 2 V39Z" fill="#0f0c1a" />
                    <path d="M0 38.500 L1.500 36.500 V8 L8 .5 H132.500 L134 2 V38.500" fill="none" stroke={PURPLE} />
                  </TabShape>
                )}
                <TabIcon><Icon /></TabIcon>
                <TabTitle>{title}</TabTitle>
                <TabClose><CrossIcon s={13} c={active ? '#fff' : '#a9a7b0'} sw={1.2} /></TabClose>
              </Tab>
            );
          })}
          <NewTab><Line w={15} c={PURPLE}><path d="M7.500 .5V14.500M.5 7.500H14.500" /></Line></NewTab>
          <WindowControls>
            <Line w={18} c={SIDE} sw={1.7}><circle cx="7.300" cy="7.300" r="6.300" /><path d="M12 12L17 17" /></Line>
            <Line w={16} h={18} c={PURPLE}><path d="M.5 17H15.500" /></Line>
            <Line w={16} c={PURPLE}><path d="M.7 4.500H11.500V15.300H.7ZM4.500 4.500V.700H15.300V11.500H11.500" /></Line>
            <CrossIcon s={16} c={PURPLE} />
          </WindowControls>
        </TabStrip>

        <AddressBar>
          <NavIcons>
            <NavIcon $w={16}><Line w={9} h={16} c="#a79dcb"><path d="M8 1L1 8L8 15" /></Line></NavIcon>
            <NavIcon $w={64}><Line w={9} h={16} c="#3e3852"><path d="M1 1L8 8L1 15" /></Line></NavIcon>
            <NavIcon $w={17}><Reload /></NavIcon>
            <NavIcon $w={36}><Dots /></NavIcon>
            <NavIcon $w={25}><Lock /></NavIcon>
          </NavIcons>
          <Url>puzzlemaker.<UrlHost>discoveryeducation.com</UrlHost>/word-search/result</Url>
          <Actions>
            <Action $w={32}><PinOut /></Action>
            <Action $w={33}><Camera /></Action>
            <Action $w={32}><Shield /></Action>
            <Action $w={33}><Send w={16} c={LILAC} /></Action>
            <Action $w={32}><Heart s={17} /></Action>
            <Action $w={11}><Dots /></Action>
            <Action $w={38}><TranslateBox>文<TranslateA>A</TranslateA></TranslateBox></Action>
            <Action $w={39}><TpLogo>Tp</TpLogo></Action>
            <Action $w={39}><Robot /></Action>
            <Action $w={38}><RedSearch /></Action>
            <Action $w={39}><StopSign><FaHandPaper size={13} color="#fff" /></StopSign></Action>
            <Action $w={38}><Cube s={17} /></Action>
            <Action $w={43}><IconWithBadge><Download /><DownloadBadge /></IconWithBadge></Action>
            <Action $w={33}><Sliders /></Action>
          </Actions>
        </AddressBar>

        <Viewport>
          <Graph>
            <Sheet>
              <NavBar>{nav.map((n, i) => <NavLink key={n} $active={i === 1}>{n}</NavLink>)}</NavBar>
              <Masthead>
                <Brand>
                  <Wordmark />
                  <Slogan>CREATE YOUR OWN PUZZLES</Slogan>
                </Brand>
                <Crossword>
                  {cross.map(([ch, col, row, hot, num], i) => (
                    <CrossCell key={i} $col={col} $row={row} $hot={hot}>{ch}{num && <CrossNumber>{num}</CrossNumber>}</CrossCell>
                  ))}
                </Crossword>
                <Intro>Puzzlemaker is a puzzle generation tool for teachers, students and parents. Create and print<br />customized word search, criss-cross, math puzzles, and more-using your own word lists.</Intro>
              </Masthead>
              <Body>
                <Title>This is your Word Search!</Title>
                <Buttons>
                  <Button $w={121} $color="#6c757d">Hide Answer</Button>
                  <Button $w={115} $color="#007bff">Print Puzzle</Button>
                  <Button $w={140} $color="#007bff" $outline><CopyIcon />Copy Puzzle</Button>
                  <Button $w={146} $color="#28a745" $outline><CopyIcon />Copy Answer</Button>
                  <Button $w={137} $color="#dc3545">Rebuild Puzzle</Button>
                </Buttons>
                <Puzzle>
                  {rows.map((r, y) => [...r].map((ch, x) => <Letter key={`${x}-${y}`} $hit={isHit(x, y)}>{ch}</Letter>))}
                  <Strokes width="251" height="251" viewBox="-0.5 -0.5 10 10">
                    {strokes.map(([a, b, c, d], i) => <path key={i} d={`M${a} ${b}L${c} ${d}`} stroke={a === c || b === d ? '#111' : '#555'} strokeWidth=".05" />)}
                  </Strokes>
                </Puzzle>
                <Words>{words.map(w => <span key={w}>{w}</span>)}</Words>
                <Placed>6 of 6 words placed.</Placed>
                <AdBox />
              </Body>
            </Sheet>
          </Graph>
          <Scrollbar><ArrowUp /><Thumb /><ArrowDown /></Scrollbar>
        </Viewport>
      </Browser>
    </Desktop>
  );
}
